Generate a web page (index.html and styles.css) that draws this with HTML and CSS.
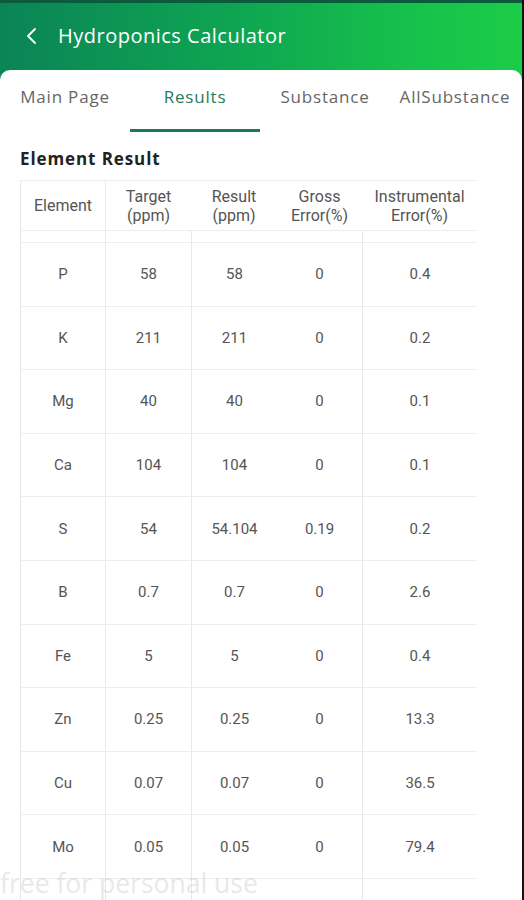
FILE: index.html
```html
<!DOCTYPE html>
<html>
<head>
<meta charset="utf-8">
<link rel="stylesheet" href="styles.css">
</head>
<body>
<div class="app">
  <header class="appbar">
    <svg class="back" width="14" height="18" viewBox="0 0 14 18"><path d="M10 2 L3 9 L10 16" fill="none" stroke="#ffffff" stroke-width="1.8" stroke-linecap="round" stroke-linejoin="round"/></svg>
    <span class="title">Hydroponics Calculator</span>
  </header>
  <main class="card">
    <nav class="tabs">
      <div class="tab">Main Page</div>
      <div class="tab active">Results</div>
      <div class="tab">Substance</div>
      <div class="tab">AllSubstance</div>
    </nav>
    <h2 class="section-title">Element Result</h2>
    <div class="table">
      <div class="row head">
        <div class="cell bl">Element</div>
        <div class="cell bl">Target<br>(ppm)</div>
        <div class="cell">Result<br>(ppm)</div>
        <div class="cell">Gross<br>Error(%)</div>
        <div class="cell">Instrumental<br>Error(%)</div>
      </div>
      <div class="row partial">
        <div class="cell bl"></div><div class="cell bl"></div><div class="cell bl"></div><div class="cell"></div><div class="cell bl"></div>
      </div>
      <div class="row body"><div class="cell bl">P</div><div class="cell bl">58</div><div class="cell bl">58</div><div class="cell">0</div><div class="cell bl">0.4</div></div>
      <div class="row body"><div class="cell bl">K</div><div class="cell bl">211</div><div class="cell bl">211</div><div class="cell">0</div><div class="cell bl">0.2</div></div>
      <div class="row body"><div class="cell bl">Mg</div><div class="cell bl">40</div><div class="cell bl">40</div><div class="cell">0</div><div class="cell bl">0.1</div></div>
      <div class="row body"><div class="cell bl">Ca</div><div class="cell bl">104</div><div class="cell bl">104</div><div class="cell">0</div><div class="cell bl">0.1</div></div>
      <div class="row body"><div class="cell bl">S</div><div class="cell bl">54</div><div class="cell bl">54.104</div><div class="cell">0.19</div><div class="cell bl">0.2</div></div>
      <div class="row body"><div class="cell bl">B</div><div class="cell bl">0.7</div><div class="cell bl">0.7</div><div class="cell">0</div><div class="cell bl">2.6</div></div>
      <div class="row body"><div class="cell bl">Fe</div><div class="cell bl">5</div><div class="cell bl">5</div><div class="cell">0</div><div class="cell bl">0.4</div></div>
      <div class="row body"><div class="cell bl">Zn</div><div class="cell bl">0.25</div><div class="cell bl">0.25</div><div class="cell">0</div><div class="cell bl">13.3</div></div>
      <div class="row body"><div class="cell bl">Cu</div><div class="cell bl">0.07</div><div class="cell bl">0.07</div><div class="cell">0</div><div class="cell bl">36.5</div></div>
      <div class="row body"><div class="cell bl">Mo</div><div class="cell bl">0.05</div><div class="cell bl">0.05</div><div class="cell">0</div><div class="cell bl">79.4</div></div>
      <div class="row body last"><div class="cell bl"></div><div class="cell bl"></div><div class="cell bl"></div><div class="cell"></div><div class="cell bl"></div></div>
    </div>
  </main>
  <div class="watermark">free for personal use</div>
</div>
</body>
</html>
```
FILE: styles.css
```css
* { box-sizing: border-box; }
html, body { margin: 0; padding: 0; }
body {
  width: 524px;
  height: 900px;
  overflow: hidden;
  background: #ffffff;
  font-family: Roboto, "Liberation Sans", sans-serif;
}
.app {
  position: relative;
  width: 524px;
  height: 900px;
  overflow: hidden;
  border-right: 2px solid #111111;
  background: #ffffff;
}
.appbar {
  height: 80px;
  border-top: 3px solid #0a5a3c;
  background: linear-gradient(90deg, #0b8456 0%, #0ea552 45%, #17c24b 80%, #1bcc48 100%);
  display: flex;
  align-items: flex-start;
  padding: 21px 0 0 25px;
  gap: 19px;
}
.back { margin-top: 3px; }
.title {
  color: #ffffff;
  font-family: "Open Sans", sans-serif;
  font-size: 20px;
  letter-spacing: 0.5px;
  line-height: 24px;
}
.card {
  margin-top: -10px;
  background: #ffffff;
  border-radius: 10px 10px 0 0;
  position: relative;
  height: 840px;
}
.tabs {
  display: flex;
  width: 520px;
  height: 62px;
}
.tab {
  width: 130px;
  text-align: center;
  font-family: "Open Sans", sans-serif;
  font-size: 17px;
  letter-spacing: 0.8px;
  color: #666666;
  padding-top: 15px;
  line-height: 24px;
  white-space: nowrap;
}
.tab.active {
  color: #267a5c;
  border-bottom: 3px solid #1d7a56;
}
.section-title {
  margin: 0;
  padding: 16px 0 0 20px;
  height: 48px;
  font-family: "Open Sans", sans-serif;
  font-weight: 700;
  font-size: 17px;
  letter-spacing: 0.9px;
  line-height: 22px;
  color: #222222;
}
.table {
  margin-left: 20px;
  width: 457px;
}
.row {
  display: grid;
  grid-template-columns: 85px 86px 86px 85px 115px;
  border-top: 1px solid #eeeeee;
}
.row.head { height: 50px; }
.row.partial { height: 12px; }
.row.body { height: 63.6px; }
.row.last { border-top: 1px solid #eeeeee; }
.cell {
  display: flex;
  align-items: center;
  justify-content: center;
  text-align: center;
  font-size: 15px;
  color: #555555;
}
.head .cell {
  font-size: 16px;
  line-height: 19px;
  color: #555555;
}
.cell.bl { border-left: 1px solid #e8e8e8; }
.watermark {
  position: absolute;
  left: 0;
  top: 865px;
  font-family: "Open Sans", sans-serif;
  font-size: 26.5px;
  line-height: 36px;
  color: rgba(190, 190, 190, 0.35);
  white-space: nowrap;
}
```
